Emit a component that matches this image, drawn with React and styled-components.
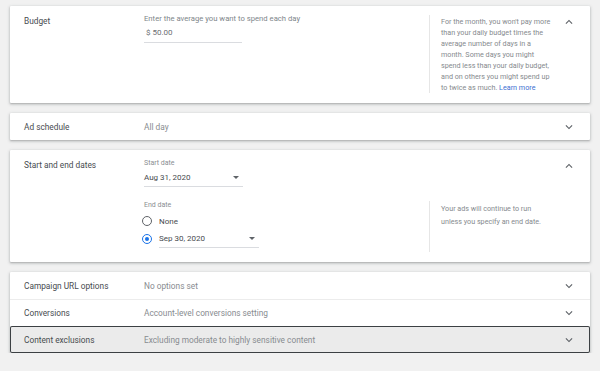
import React from "react";
import styled, { createGlobalStyle } from "styled-components";

const GlobalStyle = createGlobalStyle`
  body {
    margin: 0;
    background: #f1f1f1;
    font-family: Roboto, "Noto Sans", Arial, sans-serif;
  }
`;

const Chevron = ({ up }) => (
  <svg width="14" height="14" viewBox="0 0 24 24" fill="#5f6368">
    {up ? (
      <path d="M12 8l-6 6 1.41 1.41L12 10.83l4.59 4.58L18 14z" />
    ) : (
      <path d="M16.59 8.59L12 13.17 7.41 8.59 6 10l6 6 6-6z" />
    )}
  </svg>
);

const Caret = () => (
  <svg width="6" height="3" viewBox="0 0 6 3" fill="#5f6368">
    <path d="M0 0h6L3 3z" />
  </svg>
);

const App = () => {
  return (
    <Page>
      <GlobalStyle />

      <Card>
        <Expanded>
          <Label>Budget</Label>
          <Fields>
            <FieldRow>
              <FieldBody>
                <Hint>Enter the average you want to spend each day</Hint>
                <Input $width={98}>$ 50.00</Input>
              </FieldBody>
              <Help>
                For the month, you won't pay more than your daily budget times
                the average number of days in a month. Some days you might
                spend less than your daily budget, and on others you might
                spend up to twice as much. <a href="#">Learn more</a>
              </Help>
            </FieldRow>
          </Fields>
          <Toggle>
            <Chevron up />
          </Toggle>
        </Expanded>
      </Card>

      <Card>
        <Row>
          <Label>Ad schedule</Label>
          <Summary>All day</Summary>
          <Toggle $center>
            <Chevron />
          </Toggle>
        </Row>
      </Card>

      <Card>
        <Expanded>
          <Label>Start and end dates</Label>
          <Fields>
            <FieldRow>
              <FieldBody>
                <SmallLabel>Start date</SmallLabel>
                <Select $width={99}>
                  Aug 31, 2020
                  <Caret />
                </Select>
              </FieldBody>
            </FieldRow>
            <FieldRow $gap={13}>
              <FieldBody $bottom={4}>
                <SmallLabel>End date</SmallLabel>
                <Radios>
                  <RadioRow>
                    <Radio />
                    None
                  </RadioRow>
                  <RadioRow>
                    <Radio $checked />
                    <Select $width={100} $flat>
                      Sep 30, 2020
                      <Caret />
                    </Select>
                  </RadioRow>
                </Radios>
              </FieldBody>
              <Help $lines={13}>
                Your ads will continue to run unless you specify an end date.
              </Help>
            </FieldRow>
          </Fields>
          <Toggle>
            <Chevron up />
          </Toggle>
        </Expanded>
      </Card>

      <Card>
        <Row>
          <Label>Campaign URL options</Label>
          <Summary>No options set</Summary>
          <Toggle $center>
            <Chevron />
          </Toggle>
        </Row>
        <Row $divided>
          <Label>Conversions</Label>
          <Summary>Account-level conversions setting</Summary>
          <Toggle $center>
            <Chevron />
          </Toggle>
        </Row>
        <Row $active>
          <Label>Content exclusions</Label>
          <Summary>Excluding moderate to highly sensitive content</Summary>
          <Toggle $center>
            <Chevron />
          </Toggle>
        </Row>
      </Card>
    </Page>
  );
};

export default App;

const Page = styled.div`
  display: flex;
  flex-direction: column;
  gap: 10px;
  padding: 6px 10px 0;
`;

const Card = styled.div`
  background: #fff;
  border-radius: 1px;
  box-shadow: 0 1px 2px 0 rgba(60, 64, 67, 0.3),
    0 1px 3px 1px rgba(60, 64, 67, 0.12);
`;

const Expanded = styled.div`
  display: grid;
  grid-template-columns: 120px 1fr 28px;
  padding: 8px 7px 10px 14px;
`;

const Row = styled.div`
  display: grid;
  grid-template-columns: 120px 1fr 28px;
  align-items: center;
  height: 27px;
  box-sizing: border-box;
  padding: 0 7px 0 14px;
  border-top: ${(p) => (p.$divided ? "1px solid #ececec" : "none")};
  background: ${(p) => (p.$active ? "#ebebeb" : "transparent")};
  box-shadow: ${(p) => (p.$active ? "inset 0 0 0 1px #3c4043" : "none")};
  border-radius: ${(p) => (p.$active ? "2px" : "0")};
`;

const Label = styled.div`
  font-size: 8.3px;
  line-height: 14px;
  color: #474b4f;
`;

const Summary = styled.div`
  font-size: 8.3px;
  line-height: 14px;
  color: #888c90;
`;

const Toggle = styled.div`
  display: flex;
  justify-content: center;
  align-items: ${(p) => (p.$center ? "center" : "flex-start")};
  margin-top: ${(p) => (p.$center ? "0" : "1px")};
`;

const Fields = styled.div`
  display: flex;
  flex-direction: column;
`;

const FieldRow = styled.div`
  display: grid;
  grid-template-columns: 1fr 126px;
  margin-top: ${(p) => p.$gap || 0}px;
`;

const FieldBody = styled.div`
  display: flex;
  flex-direction: column;
  align-items: flex-start;
  padding-bottom: ${(p) => p.$bottom || 0}px;
`;

const Hint = styled.div`
  font-size: 7.7px;
  line-height: 10px;
  color: #80868b;
`;

const SmallLabel = styled.div`
  font-size: 7px;
  line-height: 10px;
  color: #8a8e92;
`;

const Input = styled.div`
  margin-top: 2px;
  width: ${(p) => p.$width}px;
  height: 17px;
  box-sizing: border-box;
  padding-left: 2px;
  border-bottom: 1px solid #dadce0;
  font-size: 8px;
  line-height: 14px;
  color: #6a6e72;
`;

const Select = styled.div`
  margin-top: ${(p) => (p.$flat ? "0" : "2px")};
  width: ${(p) => p.$width}px;
  height: ${(p) => (p.$flat ? "18px" : "17px")};
  box-sizing: border-box;
  display: flex;
  justify-content: space-between;
  align-items: center;
  padding: 0 4px 0 0;
  border-bottom: 1px solid #dadce0;
  font-size: 8px;
  line-height: 14px;
  color: #474b4f;

  svg {
    margin-bottom: 1px;
  }
`;

const Radios = styled.div`
  margin-top: 2px;
  display: flex;
  flex-direction: column;
`;

const RadioRow = styled.div`
  display: flex;
  align-items: center;
  gap: 7px;
  height: 18px;
  margin-left: -2px;
  font-size: 8px;
  color: #474b4f;
`;

const Radio = styled.span`
  position: relative;
  width: 10px;
  height: 10px;
  box-sizing: border-box;
  border-radius: 50%;
  border: 1.2px solid ${(p) => (p.$checked ? "#1a73e8" : "#5f6368")};
  flex-shrink: 0;

  &::after {
    content: "";
    display: ${(p) => (p.$checked ? "block" : "none")};
    position: absolute;
    inset: 1.6px;
    border-radius: 50%;
    background: #1a73e8;
  }
`;

const Help = styled.div`
  margin-top: 1px;
  border-left: 1px solid #e6e6e6;
  padding: 1px 3px 0 11px;
  font-size: 7.2px;
  line-height: ${(p) => p.$lines || 11}px;
  color: #868a8e;

  a {
    color: #3b6fd1;
    text-decoration: none;
  }
`;
